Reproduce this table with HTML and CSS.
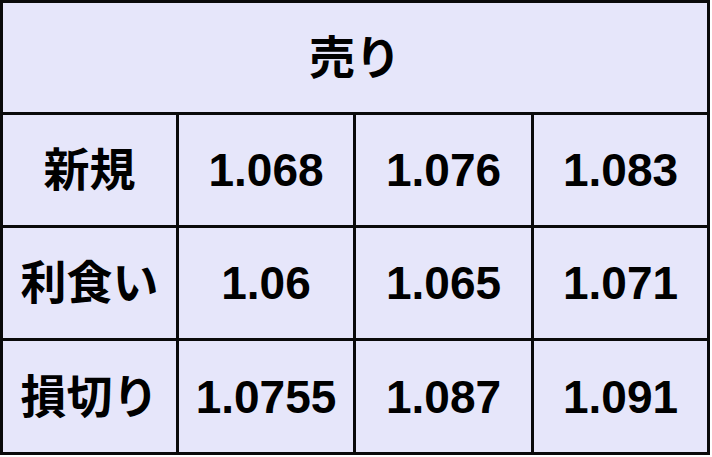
FILE: index.html
```html
<!DOCTYPE html>
<html lang="ja">
<head>
<meta charset="utf-8">
<title>売り</title>
<link rel="stylesheet" href="styles.css">
</head>
<body>
<div class="table">
  <div class="cell head">売り</div>
  <div class="cell">新規</div>
  <div class="cell">1.068</div>
  <div class="cell">1.076</div>
  <div class="cell">1.083</div>
  <div class="cell">利食い</div>
  <div class="cell">1.06</div>
  <div class="cell">1.065</div>
  <div class="cell">1.071</div>
  <div class="cell">損切り</div>
  <div class="cell">1.0755</div>
  <div class="cell">1.087</div>
  <div class="cell">1.091</div>
</div>
</body>
</html>
```
FILE: styles.css
```css
html, body {
  margin: 0;
  padding: 0;
  background: #ffffff;
}
.table {
  width: 710px;
  height: 455px;
  box-sizing: border-box;
  display: grid;
  grid-template-columns: 173px 174px 175px 173px;
  grid-template-rows: 109px 110px 110px 111px;
  gap: 3px;
  padding: 3px;
  background: #0a0a0a;
  font-family: "Liberation Sans", "Noto Sans CJK JP", sans-serif;
  font-weight: bold;
  font-size: 46px;
  color: #000;
}
.cell {
  background: #e6e6fa;
  display: flex;
  align-items: center;
  justify-content: center;
  line-height: 1;
}
.head {
  grid-column: 1 / 5;
}
```
